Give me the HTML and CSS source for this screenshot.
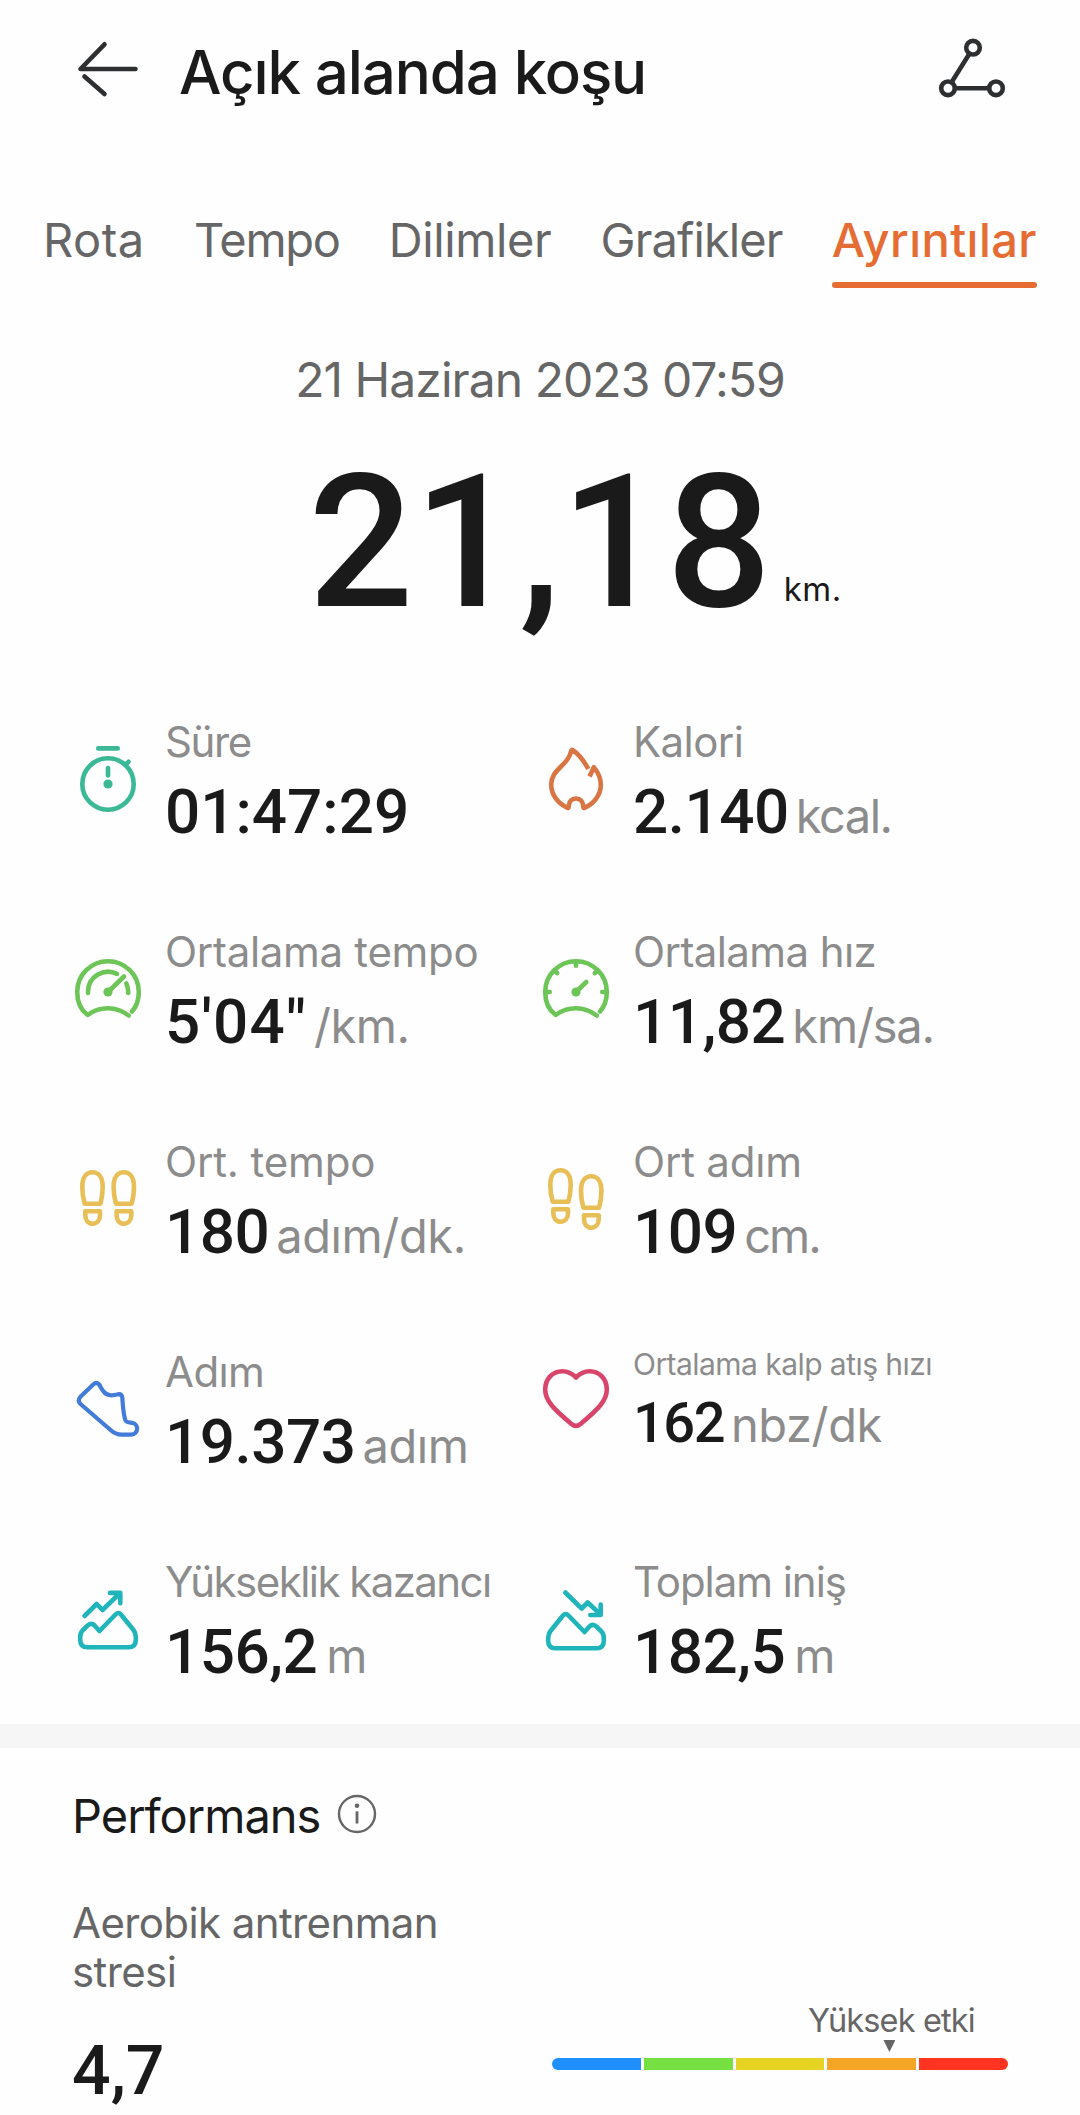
FILE: index.html
```html
<!DOCTYPE html>
<html lang="tr">
<head>
<meta charset="utf-8">
<meta name="viewport" content="width=device-width, initial-scale=1">
<title>Açık alanda koşu</title>
<link rel="stylesheet" href="styles.css">
</head>
<body>
<header class="topbar">
  <svg class="icon" viewBox="0 0 72 72"><path d="M63.500 33H8.500L32.500 8.300"/><path d="M12.500 40.500L32.500 58"/></svg>
  <h1 class="title">Açık alanda koşu</h1>
  <svg class="icon" viewBox="0 0 72 72"><circle cx="37" cy="11.700" r="6.800"/><circle cx="12" cy="52.300" r="6.800"/><circle cx="60" cy="52.300" r="6.800"/><path d="M33.400 17.700L15.600 46.300M19 52.300H53"/></svg>
</header>

<nav class="tabs">
  <a class="tab tab-route">Rota</a>
  <a class="tab tab-pace">Tempo</a>
  <a class="tab">Dilimler</a>
  <a class="tab tab-charts">Grafikler</a>
  <a class="tab tab-active">Ayrıntılar</a>
</nav>

<main>
  <p class="date">21 Haziran 2023 07:59</p>
  <div class="distance">
    <span class="distance-value">21,18</span>
    <span class="distance-unit">km.</span>
  </div>

  <section class="metrics">
    <div class="metric duration">
      <svg class="icon teal" viewBox="0 0 72 72"><path d="M26.300 2.400H45.700M53.500 18.700L56.500 15.800"/><circle cx="36" cy="38" r="25.700"/><path d="M36 22V29.500"/><circle class="solid" cx="36" cy="38" r="4.600"/></svg>
      <div class="metric-text"><div class="label">Süre</div><div class="reading"><span class="value">01:47:29</span></div></div>
    </div>
    <div class="metric calories">
      <svg class="icon orange" viewBox="0 0 72 72"><path class="butt" d="M48.300 23C44.500 16 38 7.500 32.500 4Q31.500 3.500 31.200 5C29.500 12 26 15.500 21 20.500C15 26.500 11.200 31 11.200 38.500C11.200 49 18 57.500 27.500 61.800Q28.500 62.200 28.600 61C29 55.500 31.500 52.500 36 52.500S43 55.500 43.400 61Q43.500 62.200 44.500 61.800C54 57.500 60.800 49 60.800 39C60.800 31.500 57.500 25.500 53.800 21.200L49.600 30.500"/></svg>
      <div class="metric-text"><div class="label">Kalori</div><div class="reading"><span class="value">2.140</span><span class="unit">kcal.</span></div></div>
    </div>
    <div class="metric pace">
      <svg class="icon green" viewBox="0 0 72 72"><path d="M56.700 59.500C44 50 28 50 15.700 59C8 53.500 5.200 44.500 5.200 36A30.800 30.800 0 0 1 66.800 36C66.800 44.500 64 51 60 55.500"/><path d="M16 37V36A20 20 0 0 1 45 17.900M54.300 27.500Q56.400 31.500 56.300 37M36 36L52 20.500"/><circle class="solid" cx="36" cy="36" r="4.600"/></svg>
      <div class="metric-text"><div class="label">Ortalama tempo</div><div class="reading"><span class="value">5'04"</span><span class="unit">/km.</span></div></div>
    </div>
    <div class="metric speed">
      <svg class="icon green" viewBox="0 0 72 72"><path d="M56.700 59.500C44 50 28 50 15.700 59C8 53.500 5.200 44.500 5.200 36A30.800 30.800 0 0 1 66.800 36C66.800 44.500 64 51 60 55.500"/><path d="M36 6V9.700M6 36H9.700M66 36H62.300M15 15L17.200 17.200M57 15L54.800 17.200M36 36L46.300 26"/><circle class="solid" cx="36" cy="36" r="4.600"/></svg>
      <div class="metric-text"><div class="label">Ortalama hız</div><div class="reading"><span class="value">11,82</span><span class="unit">km/sa.</span></div></div>
    </div>
    <div class="metric cadence">
      <svg class="icon yellow" viewBox="0 0 72 72">
        <g id="sole"><path d="M12.700 37.700C10.700 31 10.300 26 10.300 21C10.300 11 14.500 6.300 20.500 6.300S30.700 11 30.700 21C30.700 26 30.200 31 28.400 37.700Z"/><path d="M13.300 45.300H28V49C28 54.400 25 57.700 20.700 57.700S13.300 54.400 13.300 49Z"/></g>
        <use href="#sole" x="31.300"/>
      </svg>
      <div class="metric-text"><div class="label">Ort. tempo</div><div class="reading"><span class="value">180</span><span class="unit">adım/dk.</span></div></div>
    </div>
    <div class="metric stride">
      <svg class="icon yellow" viewBox="0 0 72 72"><use href="#sole" y="-2"/><use href="#sole" x="30.700" y="4"/></svg>
      <div class="metric-text"><div class="label">Ort adım</div><div class="reading"><span class="value">109</span><span class="unit">cm.</span></div></div>
    </div>
    <div class="metric steps">
      <svg class="icon blue" viewBox="0 0 72 72"><path d="M21.500 8.200L8.200 21Q5.200 24.700 8.500 28L38 53.500Q43.500 58.700 50 58.700H59C67 58 67 48 60 46.800C57 46.500 54.500 46.700 53.500 44.500C51 37 51 30 50.300 21.500Q49.800 18 46.500 18.200C41 19.500 36 20.500 32 16C29.500 13.500 28.500 10.500 27 8.300Q24.300 5.700 21.500 8.200Z"/></svg>
      <div class="metric-text"><div class="label">Adım</div><div class="reading"><span class="value">19.373</span><span class="unit">adım</span></div></div>
    </div>
    <div class="metric heart-rate">
      <svg class="icon red" viewBox="0 0 72 72"><path d="M36 12.500C31.500 8 27 6.300 22.500 6.300C12 6.300 5.200 14.500 5.200 24.500C5.200 35.500 13.500 44 31.500 59Q36 62.800 40.500 59C58.500 44 66.800 35.500 66.800 24.500C66.800 14.500 60 6.300 49.500 6.300C45 6.300 40.500 8 36 12.500Z"/></svg>
      <div class="metric-text"><div class="label">Ortalama kalp atış hızı</div><div class="reading"><span class="value">162</span><span class="unit">nbz/dk</span></div></div>
    </div>
    <div class="metric ascent">
      <svg class="icon cyan" viewBox="0 0 72 72"><path id="peaks" d="M8.200 51Q8.200 47 10.500 44.500L16 39.200Q19.500 36.500 22.500 39.500L27.500 45L43.500 28.500Q46.500 25.500 49 28.500L61.500 44Q63.800 47 63.800 51V54Q63.800 61.300 56.500 61.300H15.500Q8.200 61.300 8.200 54Z"/><path d="M12.500 30L24.700 18L30.500 24L48 7M38 6.900H48.300V17.300"/></svg>
      <div class="metric-text"><div class="label">Yükseklik kazancı</div><div class="reading"><span class="value">156,2</span><span class="unit">m</span></div></div>
    </div>
    <div class="metric descent">
      <svg class="icon cyan" viewBox="0 0 72 72"><use href="#peaks" transform="translate(72 1) scale(-1 1)"/><path d="M25.300 6.500L41.700 22.500L47.700 16.500L60 28M50.300 29H60.700V18.500"/></svg>
      <div class="metric-text"><div class="label">Toplam iniş</div><div class="reading"><span class="value">182,5</span><span class="unit">m</span></div></div>
    </div>
  </section>

  <section class="performance">
    <div class="section-head">
      <h2 class="section-title">Performans</h2>
      <svg class="info" viewBox="0 0 40 40"><circle cx="20" cy="20" r="18"/><path d="M20 17.300V29.500"/><circle class="dot" cx="20" cy="11.700" r="2.300"/></svg>
    </div>
    <div class="stress">
      <div class="stress-text">
        <p class="stress-label">Aerobik antrenman stresi</p>
        <p class="stress-value">4,7</p>
      </div>
      <div class="meter">
        <div class="marker"><span class="marker-label">Yüksek etki</span><span class="marker-arrow"></span></div>
        <div class="bar">
          <span class="zone zone-1"></span><span class="zone zone-2"></span><span class="zone zone-3"></span><span class="zone zone-4"></span><span class="zone zone-5"></span>
        </div>
      </div>
    </div>
  </section>
</main>
</body>
</html>
```
FILE: styles.css
```css
* { box-sizing: border-box; }

body {
  margin: 0;
  min-height: 2115px;
  background: #fefefe;
  color: #1a1a1a;
  font-family: Inter, "Liberation Sans", sans-serif;
  overflow-x: hidden;
}

h1, h2, p { margin: 0; font-weight: 400; }

.icon {
  flex: none;
  width: 72px;
  height: 72px;
  fill: none;
  stroke: currentColor;
  stroke-width: 4.600;
  stroke-linecap: round;
  stroke-linejoin: round;
}
.icon .solid { fill: currentColor; stroke: none; }
.icon .butt { stroke-linecap: butt; }

/* Header */
.topbar {
  display: flex;
  align-items: center;
  padding: 33px 72px 0;
  color: #2d2f31;
}
.title {
  flex: 1;
  margin-left: 35px;
  color: #1a1a1a;
  font-size: 60px;
  font-weight: 500;
  line-height: 78px;
  letter-spacing: -1.100px;
}

/* Tabs */
.tabs {
  display: flex;
  justify-content: space-between;
  height: 76px;
  margin-top: 101px;
  padding: 0 43px;
  color: #666;
  font-size: 47px;
  line-height: 56px;
}
.tab { letter-spacing: -0.400px; }
.tab-route { letter-spacing: 0.500px; }
.tab-pace { letter-spacing: -1.300px; }
.tab-charts { letter-spacing: -0.900px; }
.tab-active { color: #e56c33; font-weight: 500; letter-spacing: 0.450px; }
.tab-active::after {
  content: "";
  display: block;
  height: 6px;
  margin-top: 14px;
  border-radius: 3px;
  background: #e56c33;
}

/* Summary */
.date {
  margin-top: 63px;
  color: #666;
  font-size: 48px;
  line-height: 58px;
  letter-spacing: -0.950px;
  text-align: center;
}
.distance {
  display: grid;
  grid-template-columns: 1fr auto 1fr;
  align-items: end;
  margin-top: 34px;
}
.distance-value {
  grid-column: 2;
  font: 500 185px/200px Roboto, sans-serif;
  letter-spacing: 0.300px;
}
.distance-unit {
  margin-left: 12px;
  padding-bottom: 34px;
  font-size: 33px;
  line-height: 40px;
  letter-spacing: 0.500px;
}

/* Metrics */
.metrics {
  display: grid;
  grid-template-columns: 468px 468px;
  grid-auto-rows: 132px;
  row-gap: 78px;
  margin-top: 73px;
  padding-left: 72px;
}
.metric {
  display: flex;
  align-items: center;
  align-self: start;
  gap: 21px;
  white-space: nowrap;
}
.metric-text { padding-top: 1px; }
.label {
  color: #8c8c8c;
  font-size: 42px;
  line-height: 50px;
  letter-spacing: -0.600px;
}
.reading {
  display: flex;
  align-items: baseline;
  margin-top: 9px;
}
.value {
  font: 500 62px/72px Roboto, sans-serif;
  letter-spacing: -0.500px;
}
.unit {
  margin-left: 7px;
  color: #8c8c8c;
  font-size: 47px;
  line-height: 47px;
  letter-spacing: -0.400px;
}

.teal { color: #3bb896; }
.orange { color: #d97443; }
.green { color: #6cc556; }
.yellow { color: #e8be57; }
.blue { color: #437cd8; stroke-width: 4.200; }
.red { color: #d9456a; }
.cyan { color: #20b5ba; }

.duration .label { letter-spacing: -1.400px; }
.duration .value { letter-spacing: 0; }
.calories .unit { letter-spacing: -1.500px; }
.pace .label { letter-spacing: -0.300px; }
.pace .value { letter-spacing: 1.200px; }
.speed .unit { letter-spacing: -1.200px; }
.cadence .label { letter-spacing: -0.150px; }
.stride .label { letter-spacing: -0.200px; }
.stride .unit { letter-spacing: -2px; }
.ascent .label { letter-spacing: -1.550px; }
.descent .label { letter-spacing: -1.050px; }
.ascent .unit, .descent .unit { margin-left: 9px; }

.heart-rate .label { font-size: 30px; line-height: 34px; letter-spacing: -0.550px; }
.heart-rate .value { font-size: 56px; line-height: 66px; letter-spacing: -1.500px; }

/* Performance */
.performance {
  margin-top: 36px;
  padding: 38px 72px 0;
  border-top: 24px solid #f6f6f6;
}
.section-head {
  display: flex;
  align-items: center;
  gap: 17px;
}
.section-title {
  font-size: 47px;
  line-height: 60px;
  letter-spacing: -1px;
}
.info {
  width: 40px;
  height: 40px;
  margin-bottom: 5px;
  fill: none;
  stroke: #666;
  stroke-width: 2.400;
}
.info path { stroke-width: 2.800; }
.info .dot { fill: #666; stroke: none; }
.stress {
  display: flex;
  justify-content: space-between;
  align-items: flex-end;
  margin-top: 52px;
}
.stress-label {
  width: 380px;
  color: #666;
  font-size: 42px;
  line-height: 49px;
  letter-spacing: -0.600px;
}
.stress-value {
  margin-top: 35px;
  font: 500 68px/80px Roboto, sans-serif;
  letter-spacing: 0;
}
.meter { width: 456px; padding-bottom: 41px; }
.marker {
  display: flex;
  flex-direction: column;
  align-items: center;
  width: fit-content;
  height: 56px;
  margin-left: 256px;
}
.marker-label {
  color: #666;
  font-size: 32.500px;
  line-height: 38px;
  letter-spacing: -0.850px;
}
.marker-arrow {
  width: 12px;
  height: 12px;
  margin-right: 4px;
  background: #666;
  clip-path: polygon(0 0, 100% 0, 50% 100%);
}
.bar { display: flex; gap: 3px; height: 12px; border-radius: 6px; overflow: hidden; }
.zone { flex: 1; }
.zone-1 { background: #1f8ffb; }
.zone-2 { background: #76e040; }
.zone-3 { background: #e6d423; }
.zone-4 { background: #f5a626; }
.zone-5 { background: #ff3320; }
```
